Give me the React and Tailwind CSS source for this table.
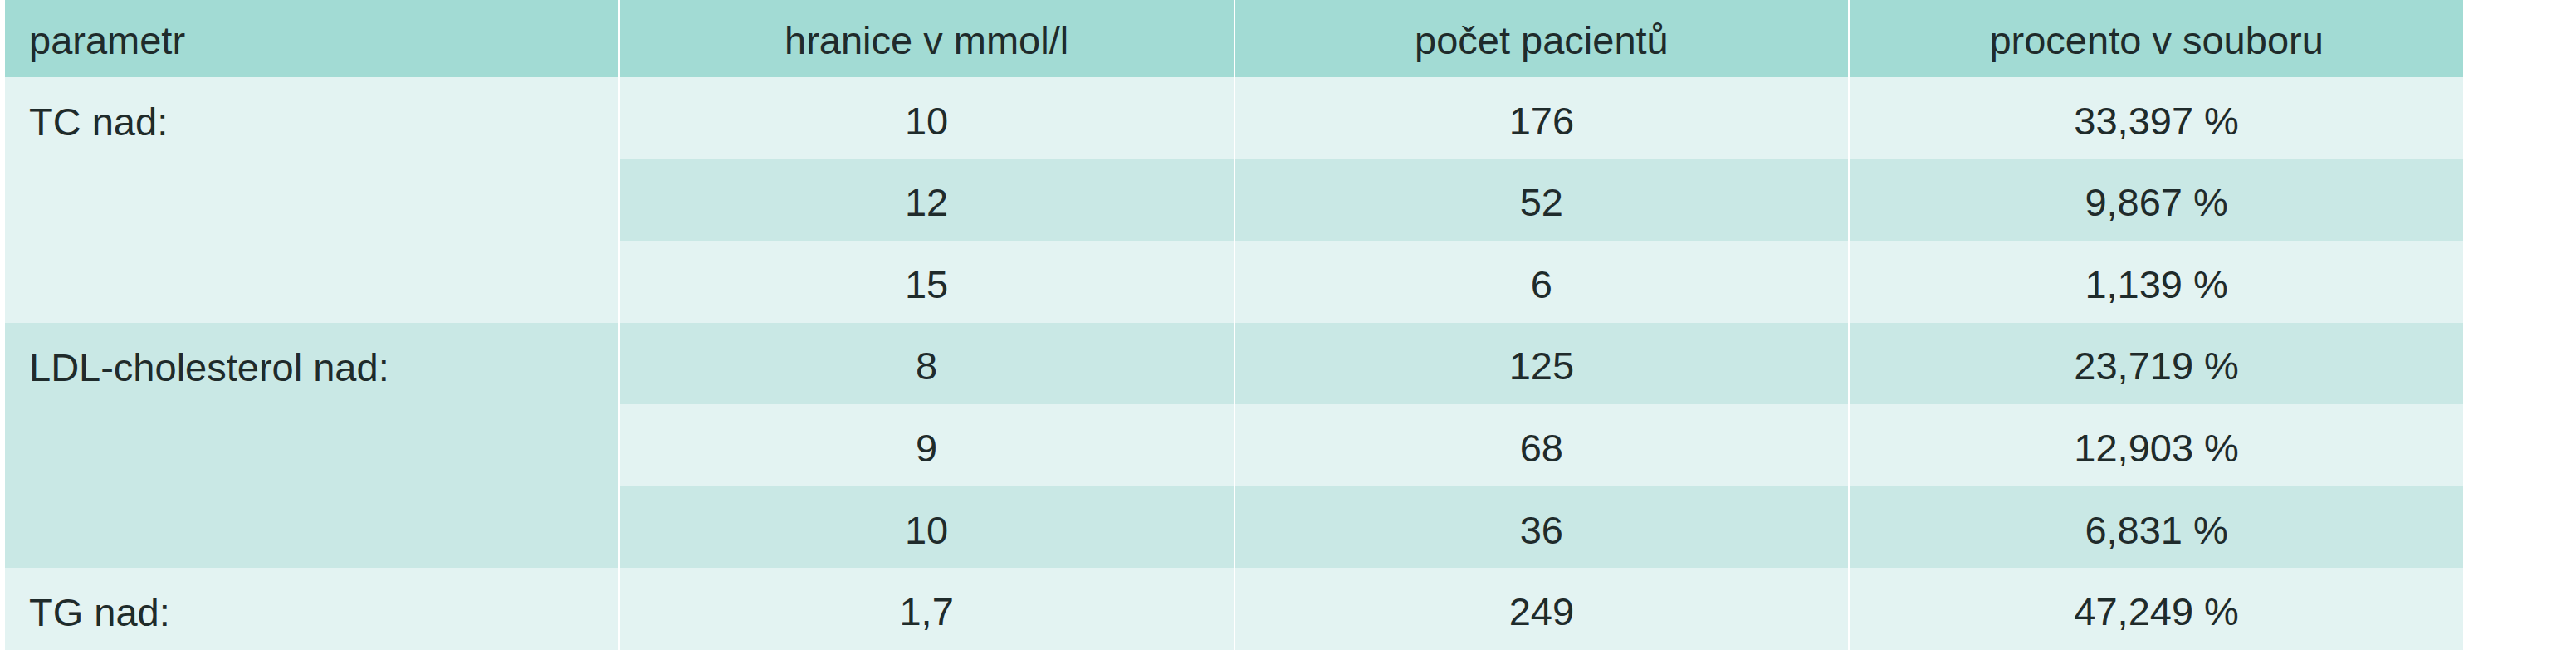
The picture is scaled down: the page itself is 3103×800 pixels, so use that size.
const groups = [
  {
    label: "TC nad:",
    tone: "light",
    rows: [
      ["10", "176", "33,397 %"],
      ["12", "52", "9,867 %"],
      ["15", "6", "1,139 %"],
    ],
  },
  {
    label: "LDL-cholesterol nad:",
    tone: "mid",
    rows: [
      ["8", "125", "23,719 %"],
      ["9", "68", "12,903 %"],
      ["10", "36", "6,831 %"],
    ],
  },
  {
    label: "TG nad:",
    tone: "light",
    rows: [["1,7", "249", "47,249 %"]],
  },
];

const tones = {
  light: "bg-[#e3f3f2]",
  mid: "bg-[#c9e8e5]",
};

const spans = {
  1: "row-span-1",
  3: "row-span-3",
};

export default function App() {
  let rowIndex = 0;
  const cells = [];

  groups.forEach((group, g) => {
    group.rows.forEach((row, r) => {
      if (r === 0) {
        cells.push(
          <div
            key={`label-${g}`}
            className={`${spans[group.rows.length]} ${tones[group.tone]} flex items-start pt-[30px] pl-[29px]`}
          >
            {group.label}
          </div>
        );
      }
      const tone = rowIndex % 2 === 0 ? tones.light : tones.mid;
      row.forEach((value, c) => {
        cells.push(
          <div
            key={`${g}-${r}-${c}`}
            className={`${tone} flex items-center justify-center pt-[6px]`}
          >
            {value}
          </div>
        );
      });
      rowIndex++;
    });
  });

  return (
    <div className="w-[3103px] h-[800px] bg-white">
      <div
        className="ml-[6px] w-[2961px] h-[783px] grid grid-cols-4 grid-rows-[93px_repeat(7,minmax(0,1fr))] gap-x-[2px] bg-white text-[47px] leading-none text-[#1f2b2b]"
        style={{ fontFamily: '"Liberation Sans", Arial, sans-serif' }}
      >
        <div className="bg-[#a2dbd4] flex items-center pl-[29px] pt-[4px]">parametr</div>
        <div className="bg-[#a2dbd4] flex items-center justify-center pt-[4px]">hranice v mmol/l</div>
        <div className="bg-[#a2dbd4] flex items-center justify-center pt-[4px]">počet pacientů</div>
        <div className="bg-[#a2dbd4] flex items-center justify-center pt-[4px]">procento v souboru</div>
        {cells}
      </div>
    </div>
  );
}
